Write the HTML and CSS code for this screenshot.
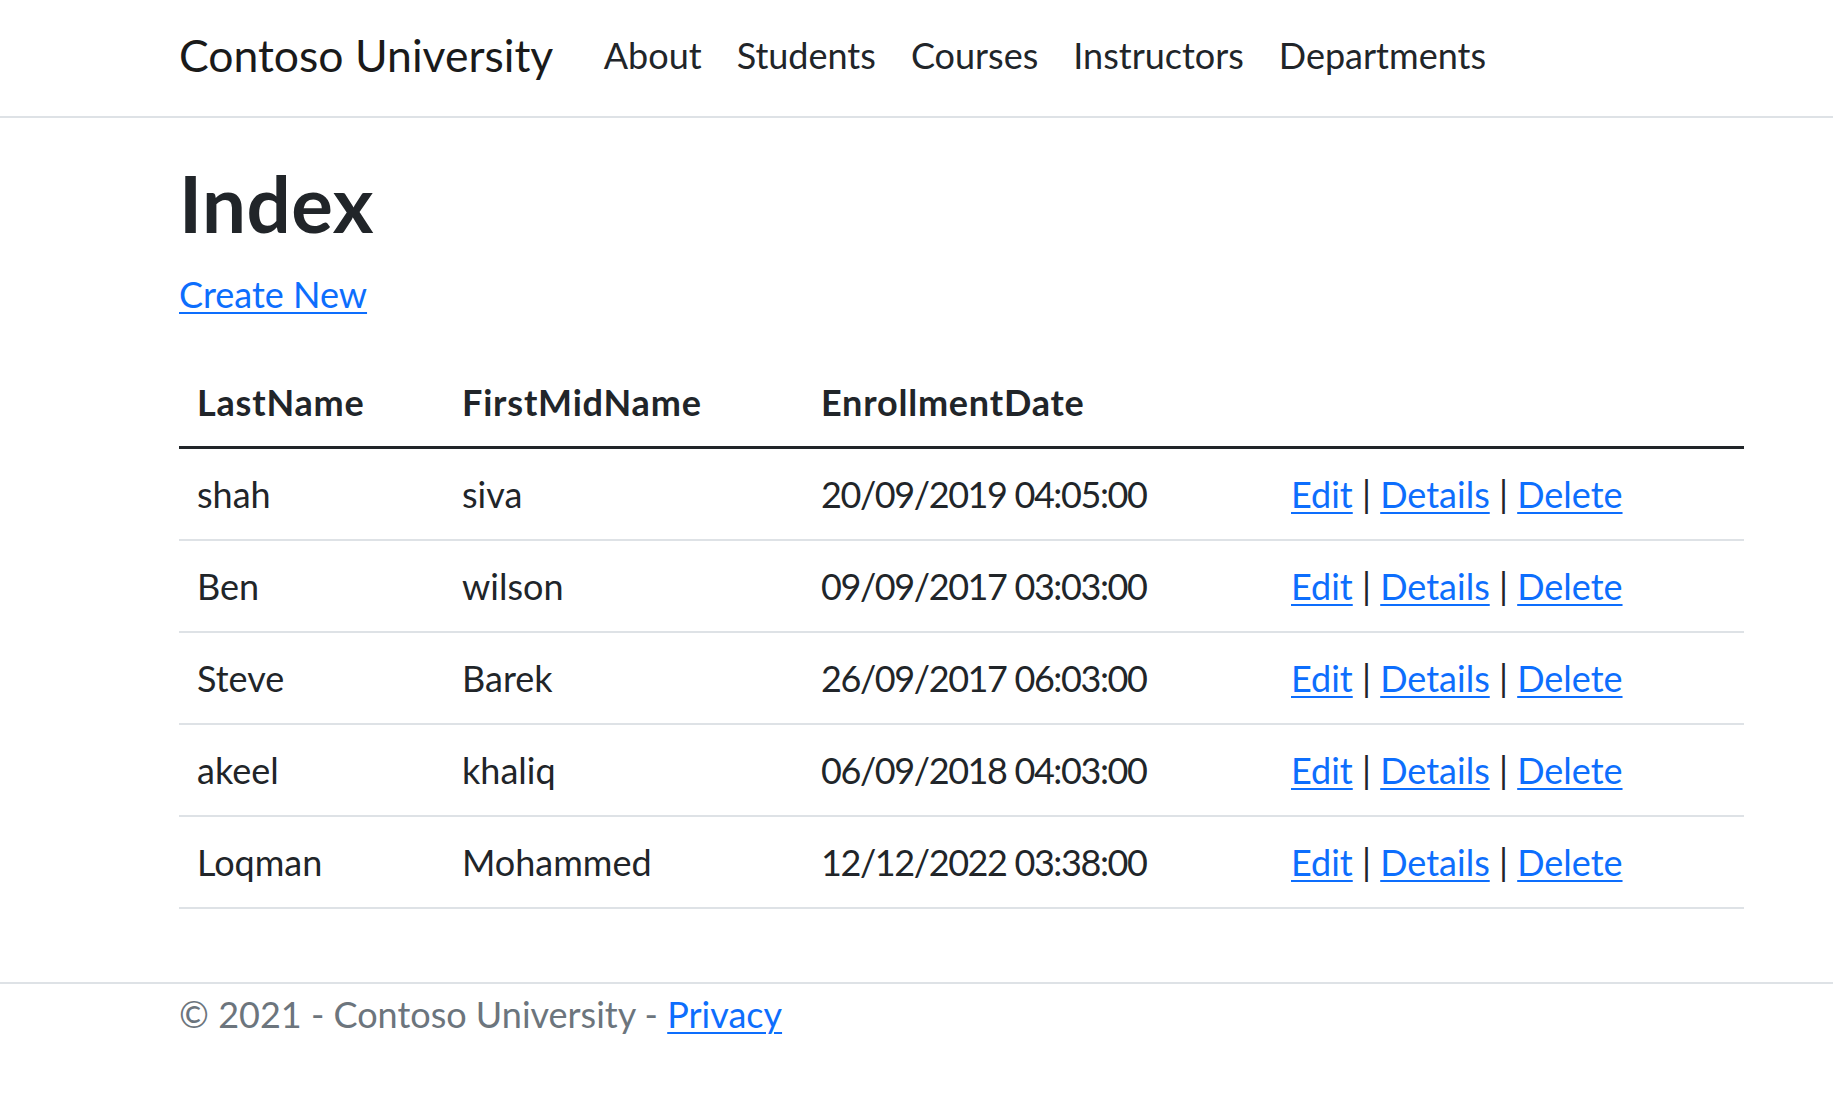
FILE: index.html
```html
<!DOCTYPE html>
<html lang="en">
<head>
<meta charset="utf-8">
<title>Index - Contoso University</title>
<link rel="stylesheet" href="styles.css">
</head>
<body>
<header>
  <nav class="navbar">
    <div class="container nav-inner">
      <a class="brand" href="#">Contoso University</a>
      <ul class="nav-list">
        <li><a class="nav-link" href="#">About</a></li>
        <li><a class="nav-link" href="#">Students</a></li>
        <li><a class="nav-link" href="#">Courses</a></li>
        <li><a class="nav-link" href="#">Instructors</a></li>
        <li><a class="nav-link" href="#">Departments</a></li>
      </ul>
    </div>
  </nav>
</header>
<div class="container">
  <main class="main">
    <h1 class="title">Index</h1>
    <p class="create"><a href="#">Create New</a></p>
    <table class="table">
      <thead>
        <tr>
          <th class="c1">LastName</th>
          <th class="c2">FirstMidName</th>
          <th class="c3">EnrollmentDate</th>
          <th class="c4"></th>
        </tr>
      </thead>
      <tbody>
        <tr>
          <td>shah</td>
          <td>siva</td>
          <td class="date">20/09/2019 04:05:00</td>
          <td><a href="#">Edit</a> | <a href="#">Details</a> | <a href="#">Delete</a></td>
        </tr>
        <tr>
          <td>Ben</td>
          <td>wilson</td>
          <td class="date">09/09/2017 03:03:00</td>
          <td><a href="#">Edit</a> | <a href="#">Details</a> | <a href="#">Delete</a></td>
        </tr>
        <tr>
          <td>Steve</td>
          <td>Barek</td>
          <td class="date">26/09/2017 06:03:00</td>
          <td><a href="#">Edit</a> | <a href="#">Details</a> | <a href="#">Delete</a></td>
        </tr>
        <tr>
          <td>akeel</td>
          <td>khaliq</td>
          <td class="date">06/09/2018 04:03:00</td>
          <td><a href="#">Edit</a> | <a href="#">Details</a> | <a href="#">Delete</a></td>
        </tr>
        <tr>
          <td>Loqman</td>
          <td>Mohammed</td>
          <td class="date">12/12/2022 03:38:00</td>
          <td><a href="#">Edit</a> | <a href="#">Details</a> | <a href="#">Delete</a></td>
        </tr>
      </tbody>
    </table>
  </main>
</div>
<footer class="footer">
  <div class="container">&copy; 2021 - Contoso University - <a href="#">Privacy</a></div>
</footer>
</body>
</html>
```
FILE: styles.css
```css
html, body {
  margin: 0;
  padding: 0;
  background: #fff;
}
body {
  font-family: Lato, "Open Sans", "Liberation Sans", sans-serif;
  font-size: 36px;
  line-height: 54px;
  color: #212529;
}
a {
  color: #0d6efd;
  text-decoration: underline;
  text-decoration-thickness: 2px;
  text-underline-offset: 4px;
}
.container {
  width: 1565px;
  margin-left: 179px;
}
.navbar {
  border-bottom: 2px solid #dee2e6;
  padding: 21px 0 27px;
  background: #fff;
}
.nav-inner {
  display: flex;
  align-items: center;
  height: 68px;
}
.brand {
  font-size: 44.5px;
  line-height: 68px;
  color: #1a1a1a;
  text-decoration: none;
  margin-right: 33px;
  white-space: nowrap;
}
.nav-list {
  display: flex;
  list-style: none;
  margin: 0;
  padding: 0;
}
.nav-link {
  display: block;
  padding: 0 17.5px;
  color: #212529;
  text-decoration: none;
  line-height: 54px;
}
.main {
  padding-top: 40px;
}
.title {
  font-size: 78px;
  line-height: 91px;
  font-weight: 700;
  letter-spacing: 0.5px;
  margin: 0 0 18px;
}
.create {
  margin: 0 0 36px;
}
.table {
  border-collapse: collapse;
  table-layout: fixed;
  width: 1565px;
  margin: 0;
}
.table th,
.table td {
  box-sizing: border-box;
  white-space: nowrap;
}
.table th {
  text-align: left;
  font-weight: 700;
  letter-spacing: 0.8px;
  padding: 18px 18px 17px;
  border-bottom: 3px solid #212529;
}
.table td {
  padding: 18px;
  border-bottom: 2px solid #dee2e6;
}
.table td.date {
  letter-spacing: -1.4px;
}
.c1 { width: 265px; }
.c2 { width: 359px; }
.c3 { width: 470px; }
.c4 { width: 471px; }
.footer {
  margin-top: 73px;
  border-top: 2px solid #dee2e6;
  color: #6c757d;
  line-height: 60px;
  white-space: nowrap;
}
```
